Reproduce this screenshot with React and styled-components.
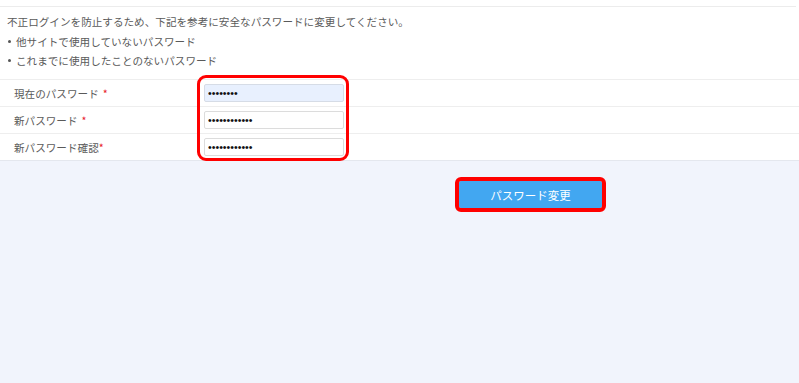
import React from "react";
import styled, { createGlobalStyle } from "styled-components";

const Global = createGlobalStyle`
  html, body { margin: 0; padding: 0; }
  body {
    background: #f1f4fc;
    font-family: "Noto Sans CJK JP", "Noto Sans", sans-serif;
    color: #555;
  }
`;

const Page = styled.div`
  min-height: 383px;
  background: #f1f4fc;
`;

const Panel = styled.div`
  background: #fff;
`;

const TopBar = styled.div`
  width: 796px;
  height: 6px;
  border-bottom: 1px solid #ececec;
`;

const Notice = styled.div`
  padding: 5px 7px 9px;
  border-bottom: 1px solid #eeeeee;
  font-size: 10.6px;
  line-height: 20px;
  color: #5a5a5a;
`;

const Line = styled.div`
  white-space: nowrap;
`;

const Bullet = styled.div`
  display: flex;
  align-items: center;
  white-space: nowrap;
  height: 19px;
  &::before {
    content: "";
    width: 3px;
    height: 3px;
    border-radius: 50%;
    background: #555;
    margin: 0 5px 0 1px;
  }
`;

const Form = styled.div`
  position: relative;
  border-bottom: 1px solid #e4e7ee;
`;

const Row = styled.div`
  display: grid;
  grid-template-columns: 204px 140px;
  align-items: center;
  height: 26px;
  border-top: ${(p) => (p.$first ? "none" : "1px solid #eeeeee")};
`;

const Label = styled.div`
  padding-left: 14px;
  font-size: 10.6px;
  color: #5a5a5a;
  white-space: nowrap;
`;

const Req = styled.span`
  color: #e8202a;
  margin-left: ${(p) => (p.$gap ? "4px" : "0")};
`;

const Input = styled.input`
  box-sizing: border-box;
  width: 140px;
  height: 18px;
  margin: 0;
  padding: 0 3px;
  border: 1px solid ${(p) => (p.$filled ? "#d6dce6" : "#dcdcdc")};
  border-radius: 2px;
  background: ${(p) => (p.$filled ? "#e8f0fe" : "#fff")};
  font-family: "Liberation Sans", sans-serif;
  font-size: 10.6px;
  color: #111;
  outline: none;
`;

const Highlight = styled.div`
  position: absolute;
  left: 197px;
  top: -5px;
  width: 152px;
  height: 86px;
  box-sizing: border-box;
  border: 3.5px solid #f00;
  border-radius: 9px;
  pointer-events: none;
`;

const Actions = styled.div`
  display: flex;
  padding: 20px 0 0 459px;
`;

const SubmitButton = styled.button`
  width: 143px;
  height: 27px;
  border: none;
  border-radius: 2px;
  background: #42a7f1;
  color: #fff;
  font-family: "Noto Sans CJK JP", sans-serif;
  font-size: 11.5px;
  outline: 4px solid #f00;
  outline-offset: 0;
  cursor: pointer;
`;

const fields = [
  { label: "現在のパスワード", gap: true, value: "12345678", filled: true },
  { label: "新パスワード", gap: true, value: "123456789012", filled: false },
  { label: "新パスワード確認", gap: false, value: "123456789012", filled: false },
];

export default function App() {
  return (
    <Page>
      <Global />
      <Panel>
        <TopBar />
        <Notice>
          <Line>不正ログインを防止するため、下記を参考に安全なパスワードに変更してください。</Line>
          <Bullet>他サイトで使用していないパスワード</Bullet>
          <Bullet>これまでに使用したことのないパスワード</Bullet>
        </Notice>
        <Form>
          {fields.map((f, i) => (
            <Row key={f.label} $first={i === 0}>
              <Label>
                {f.label}
                <Req $gap={f.gap}>*</Req>
              </Label>
              <Input type="password" readOnly value={f.value} $filled={f.filled} />
            </Row>
          ))}
          <Highlight />
        </Form>
      </Panel>
      <Actions>
        <SubmitButton type="button">パスワード変更</SubmitButton>
      </Actions>
    </Page>
  );
}
